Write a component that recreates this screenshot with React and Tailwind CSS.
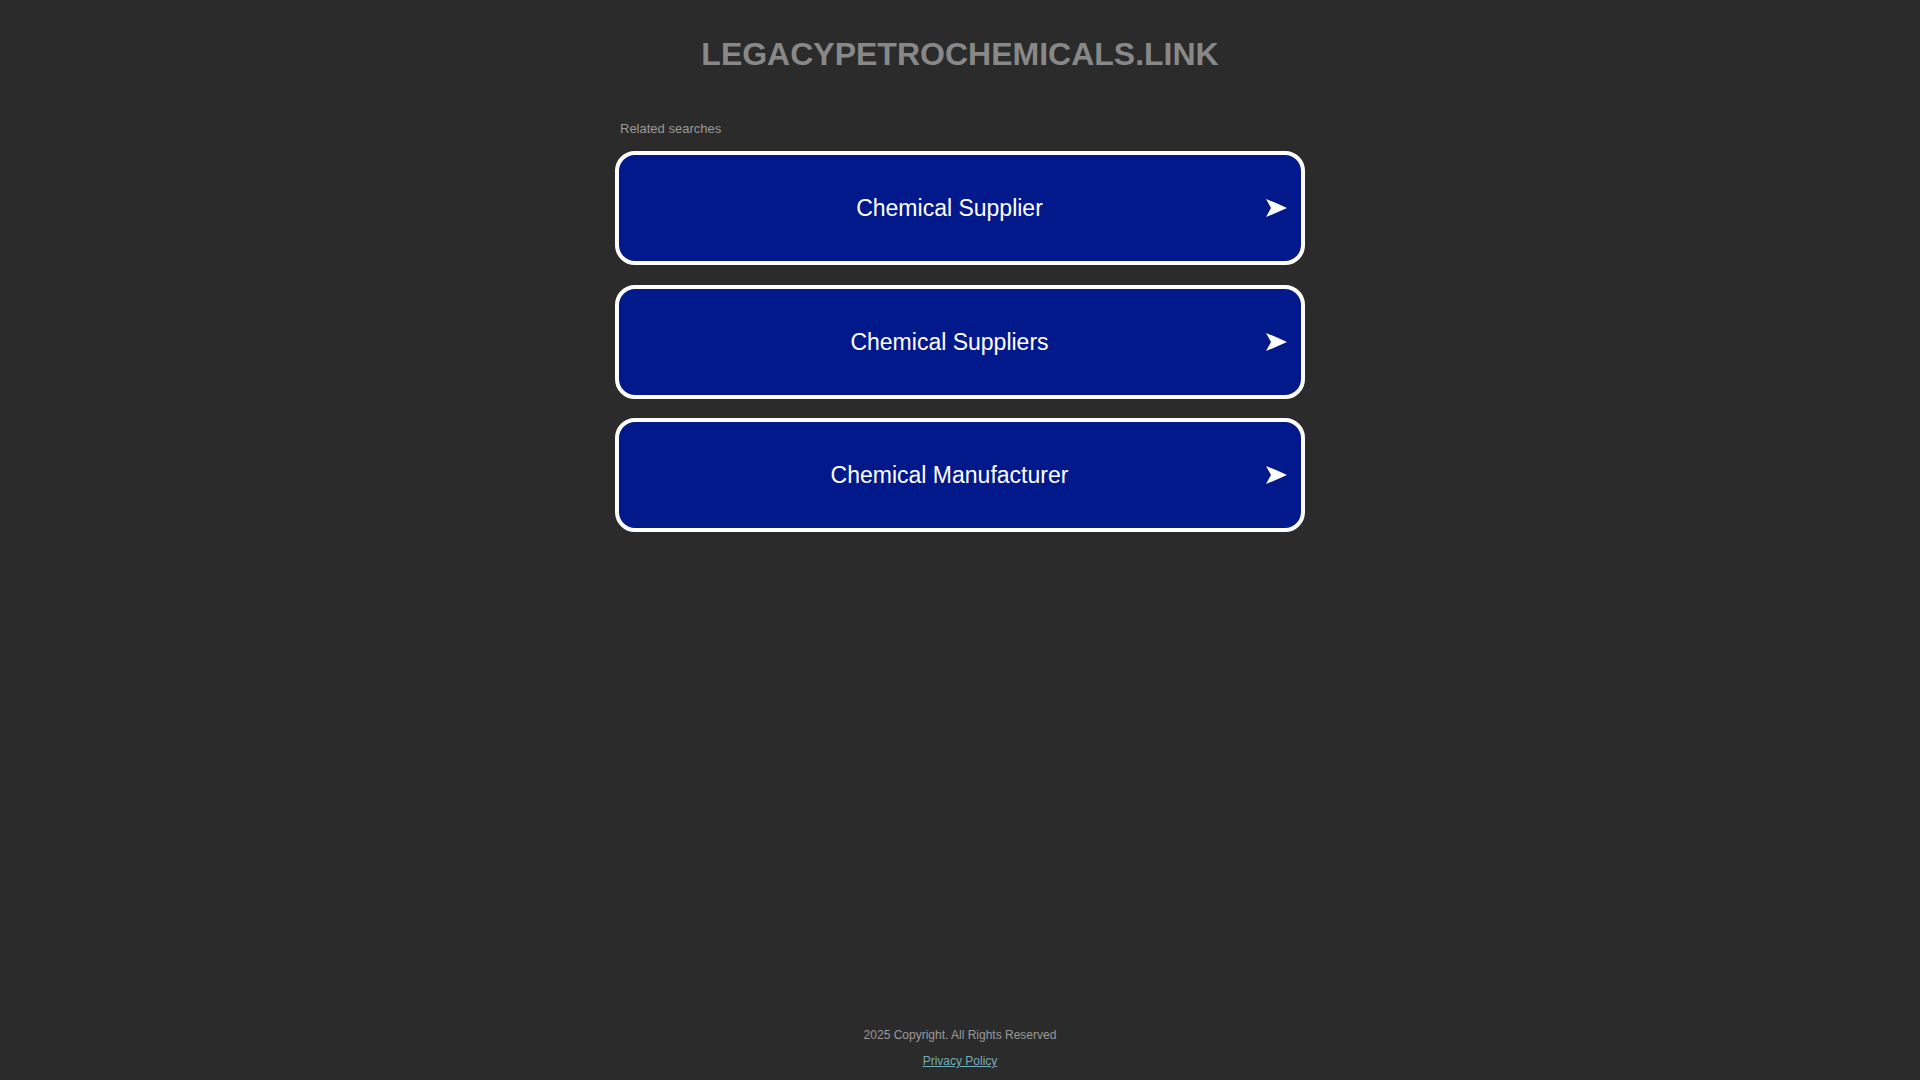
import React from 'react';

const searches = ['Chemical Supplier', 'Chemical Suppliers', 'Chemical Manufacturer'];

const Arrow = () => (
  <svg width="21" height="18" viewBox="0 0 21 18" className="shrink-0">
    <path d="M0 0 Q10 4 21 9 Q10 14 0 18 L5 9 Z" fill="#ffffff" />
  </svg>
);

const SearchLink = ({ label }) => (
  <a
    href="#"
    className="flex items-center h-[114px] mb-[19.5px] rounded-[20px] border-[4px] border-white bg-[#02198b] pl-[14px] pr-[14px]"
  >
    <span className="flex-1 pt-[1px] text-center text-white text-[23px] leading-[27px]">{label}</span>
    <Arrow />
  </a>
);

export default function App() {
  return (
    <div className="min-h-screen bg-[#2b2b2b] flex flex-col items-center font-['Liberation_Sans',Arial,sans-serif]">
      <h1 className="mt-[36px] text-[32px] leading-[37px] font-bold text-[#888888]">
        LEGACYPETROCHEMICALS.LINK
      </h1>

      <div className="w-[690px] mt-[48px]">
        <p className="pl-[5px] text-[13px] leading-[15px] text-[#999999]">Related searches</p>
        <div className="mt-[15px]">
          {searches.map((s) => (
            <SearchLink key={s} label={s} />
          ))}
        </div>
      </div>

      <footer className="mt-auto pb-[12px] flex flex-col items-center text-[12px] leading-[14px]">
        <p className="text-[#999999]">2025 Copyright. All Rights Reserved</p>
        <a href="#" className="mt-[12px] text-[#72adb8] underline">
          Privacy Policy
        </a>
      </footer>
    </div>
  );
}
